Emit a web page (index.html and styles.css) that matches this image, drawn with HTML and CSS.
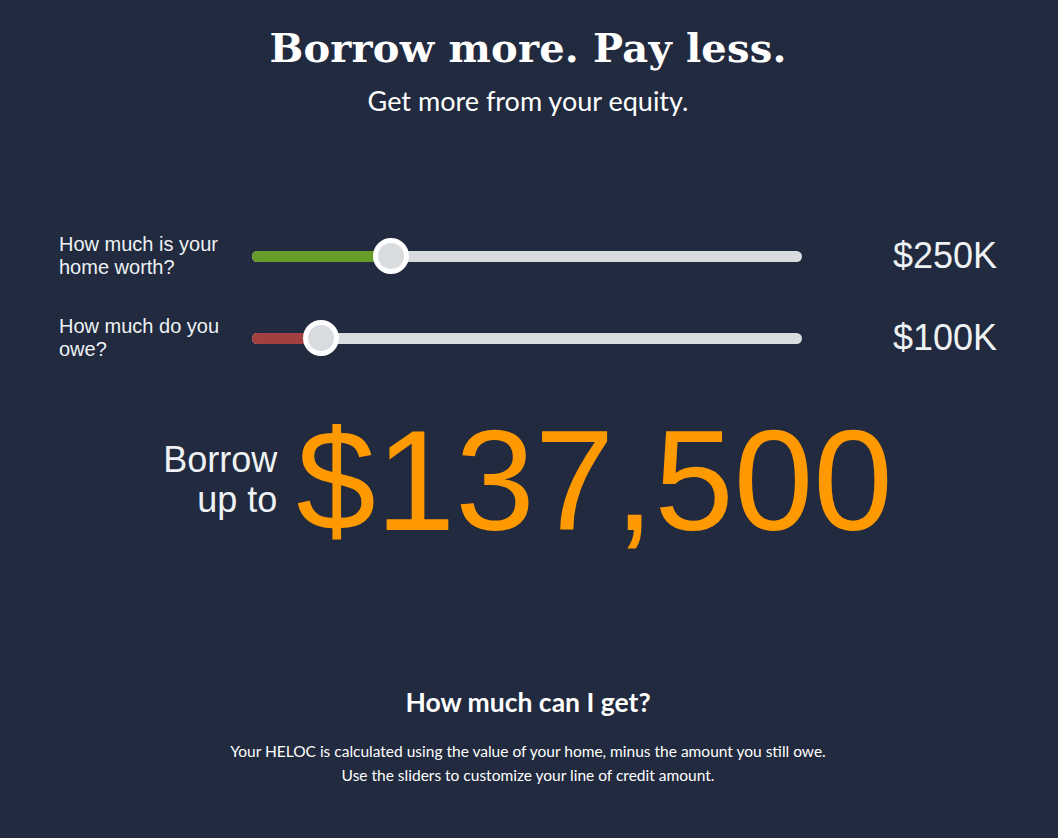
FILE: index.html
```html
<!DOCTYPE html>
<html lang="en">
<head>
<meta charset="utf-8">
<title>Borrow more. Pay less.</title>
<link rel="stylesheet" href="styles.css">
</head>
<body>
<main class="page">
  <header class="hero">
    <h1 class="hero-title">Borrow more. Pay less.</h1>
    <p class="hero-sub">Get more from your equity.</p>
  </header>

  <section class="sliders">
    <div class="slider-row">
      <div class="slider-label">How much is your<br>home worth?</div>
      <div class="slider">
        <div class="slider-track">
          <div class="slider-fill fill-green" style="width: 25.3%"></div>
          <div class="slider-thumb" style="left: 25.3%"></div>
        </div>
      </div>
      <div class="slider-value">$250K</div>
    </div>
    <div class="slider-row">
      <div class="slider-label">How much do you<br>owe?</div>
      <div class="slider">
        <div class="slider-track">
          <div class="slider-fill fill-red" style="width: 12.5%"></div>
          <div class="slider-thumb" style="left: 12.5%"></div>
        </div>
      </div>
      <div class="slider-value">$100K</div>
    </div>
  </section>

  <section class="result">
    <div class="result-label">Borrow<br>up to</div>
    <div class="result-amount">$137,500</div>
  </section>

  <section class="info">
    <h2 class="info-title">How much can I get?</h2>
    <p class="info-text">Your HELOC is calculated using the value of your home, minus the amount you still owe.<br>Use the sliders to customize your line of credit amount.</p>
  </section>
</main>
</body>
</html>
```

FILE: styles.css
```css
html, body {
  margin: 0;
  padding: 0;
  background: #212a3e;
  color: #ffffff;
}

body {
  font-family: "Liberation Sans", Arial, sans-serif;
  min-height: 838px;
}

.page {
  display: flex;
  flex-direction: column;
  padding: 24px 61px 40px 59px;
}

.hero {
  display: flex;
  flex-direction: column;
  align-items: center;
}

.hero-title {
  margin: 0;
  font-family: "DejaVu Serif", serif;
  font-weight: 700;
  font-size: 40px;
  line-height: 48px;
  color: #ffffff;
  letter-spacing: 0.2px;
}

.hero-sub {
  margin: 13px 0 0;
  font-family: Lato, "Open Sans", sans-serif;
  font-size: 27px;
  line-height: 32px;
  color: #ffffff;
}

.sliders {
  margin-top: 115px;
  display: flex;
  flex-direction: column;
  gap: 34px;
}

.slider-row {
  display: grid;
  grid-template-columns: 193px 550px 1fr;
  align-items: center;
  height: 48px;
}

.slider-label {
  font-size: 20px;
  line-height: 23px;
  color: #eef2f5;
}

.slider {
  display: flex;
  align-items: center;
}

.slider-track {
  position: relative;
  width: 100%;
  height: 11px;
  border-radius: 6px;
  background: #d8dcdf;
}

.slider-fill {
  height: 100%;
  border-radius: 6px 0 0 6px;
}

.fill-green {
  background: #669c2a;
}

.fill-red {
  background: #a23f3f;
}

.slider-thumb {
  position: absolute;
  top: 50%;
  width: 26px;
  height: 26px;
  border: 5px solid #ffffff;
  border-radius: 50%;
  background: #d8dcdf;
  transform: translate(-50%, -50%);
}

.slider-value {
  text-align: right;
  font-size: 36px;
  line-height: 40px;
  color: #eef2f5;
}

.result {
  margin-top: 44px;
  display: flex;
  justify-content: center;
  align-items: center;
  gap: 19px;
}

.result-label {
  text-align: right;
  font-size: 36px;
  line-height: 40px;
  color: #eef2f5;
  margin-top: -2px;
}

.result-amount {
  font-size: 143px;
  line-height: 150px;
  color: #ff9900;
}

.info {
  margin-top: 130px;
  display: flex;
  flex-direction: column;
  align-items: center;
  font-family: Lato, "Open Sans", sans-serif;
}

.info-title {
  margin: 0;
  font-size: 26.5px;
  line-height: 32px;
  font-weight: 700;
  color: #ffffff;
}

.info-text {
  margin: 21px 0 0;
  text-align: center;
  font-size: 15.5px;
  line-height: 24px;
  color: #ffffff;
}
```
